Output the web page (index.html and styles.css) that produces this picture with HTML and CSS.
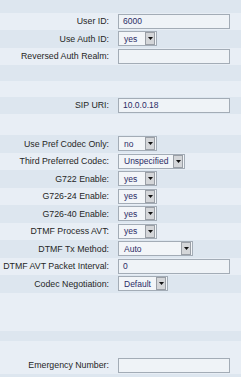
FILE: index.html
```html
<!DOCTYPE html>
<html lang="en">
<head>
<meta charset="UTF-8">
<title>Line Settings</title>
<link rel="stylesheet" href="styles.css">
</head>
<body>

<div class="form">
  <div class="row dark gap-top"></div>
  <div class="row light">
    <div class="label">User ID:</div>
    <div class="field wide">6000</div>
  </div>
  <div class="row dark">
    <div class="label">Use Auth ID:</div>
    <div class="sel w-yes"><span>yes</span><i class="arrow"><svg width="5" height="3" viewBox="0 0 5 3"><path d="M0 0H5L2.5 3Z"/></svg></i></div>
  </div>
  <div class="row light">
    <div class="label">Reversed Auth Realm:</div>
    <div class="field wide"></div>
  </div>
  <div class="row dark gap-a"></div>
  <div class="row light gap-b"></div>
  <div class="row dark">
    <div class="label">SIP URI:</div>
    <div class="field wide">10.0.0.18</div>
  </div>
  <div class="row light gap-c"></div>
  <div class="row dark">
    <div class="label">Use Pref Codec Only:</div>
    <div class="sel w-yes"><span>no</span><i class="arrow"><svg width="5" height="3" viewBox="0 0 5 3"><path d="M0 0H5L2.5 3Z"/></svg></i></div>
  </div>
  <div class="row light">
    <div class="label">Third Preferred Codec:</div>
    <div class="sel w-unspec"><span>Unspecified</span><i class="arrow"><svg width="5" height="3" viewBox="0 0 5 3"><path d="M0 0H5L2.5 3Z"/></svg></i></div>
  </div>
  <div class="row dark">
    <div class="label">G722 Enable:</div>
    <div class="sel w-yes"><span>yes</span><i class="arrow"><svg width="5" height="3" viewBox="0 0 5 3"><path d="M0 0H5L2.5 3Z"/></svg></i></div>
  </div>
  <div class="row light">
    <div class="label">G726-24 Enable:</div>
    <div class="sel w-yes"><span>yes</span><i class="arrow"><svg width="5" height="3" viewBox="0 0 5 3"><path d="M0 0H5L2.5 3Z"/></svg></i></div>
  </div>
  <div class="row dark">
    <div class="label">G726-40 Enable:</div>
    <div class="sel w-yes"><span>yes</span><i class="arrow"><svg width="5" height="3" viewBox="0 0 5 3"><path d="M0 0H5L2.5 3Z"/></svg></i></div>
  </div>
  <div class="row light">
    <div class="label">DTMF Process AVT:</div>
    <div class="sel w-yes"><span>yes</span><i class="arrow"><svg width="5" height="3" viewBox="0 0 5 3"><path d="M0 0H5L2.5 3Z"/></svg></i></div>
  </div>
  <div class="row dark">
    <div class="label">DTMF Tx Method:</div>
    <div class="sel w-auto"><span>Auto</span><i class="arrow"><svg width="5" height="3" viewBox="0 0 5 3"><path d="M0 0H5L2.5 3Z"/></svg></i></div>
  </div>
  <div class="row light">
    <div class="label">DTMF AVT Packet Interval:</div>
    <div class="field wide">0</div>
  </div>
  <div class="row dark">
    <div class="label">Codec Negotiation:</div>
    <div class="sel w-default"><span>Default</span><i class="arrow"><svg width="5" height="3" viewBox="0 0 5 3"><path d="M0 0H5L2.5 3Z"/></svg></i></div>
  </div>
  <div class="row light gap-d"></div>
  <div class="row dark gap-e"></div>
  <div class="row light gap-f"></div>
  <div class="row light">
    <div class="label">Emergency Number:</div>
    <div class="field wide"></div>
  </div>
  <div class="row dark gap-end"></div>
</div>

</body>
</html>
```

FILE: styles.css
```css
body {
  margin: 0;
  background-color: #e6edf4;
  font-family: "Liberation Sans", Arial, sans-serif;
  font-size: 8.5px;
}
.form {
  width: 241px;
}
.row {
  display: flex;
  align-items: center;
  height: 17.5px;
}
.light {
  background-color: #e8eef5;
}
.dark {
  background-color: #dde6ef;
}
.gap-top { height: 12.5px; }
.gap-a { height: 16px; }
.gap-b { height: 15.5px; }
.gap-c { height: 21px; }
.gap-d { height: 38px; }
.gap-e { height: 10px; }
.gap-f { height: 16px; }
.gap-end { height: 4px; }
.label {
  width: 109px;
  padding-right: 9px;
  text-align: right;
  font-size: 8.8px;
  color: #262626;
  white-space: nowrap;
}
.field {
  box-sizing: border-box;
  height: 15px;
  padding-left: 4px;
  line-height: 13px;
  background-color: #eff3f7;
  border: 1px solid #a3acb6;
  color: #2b2b66;
}
.wide {
  width: 112px;
}
.sel {
  box-sizing: border-box;
  display: flex;
  align-items: center;
  justify-content: space-between;
  height: 15px;
  padding: 0 1px 0 5px;
  background-color: #f2f5f8;
  border: 1px solid #a3acb6;
  color: #2b2b66;
}
.w-yes { width: 39px; }
.w-unspec { width: 67px; }
.w-auto { width: 75px; }
.w-default { width: 50px; }
.arrow {
  box-sizing: border-box;
  display: flex;
  align-items: center;
  justify-content: center;
  width: 10px;
  height: 13px;
  background-color: #d4d6d9;
  border: 1px solid #9a9fa6;
}
.arrow svg {
  fill: #111;
}
```
